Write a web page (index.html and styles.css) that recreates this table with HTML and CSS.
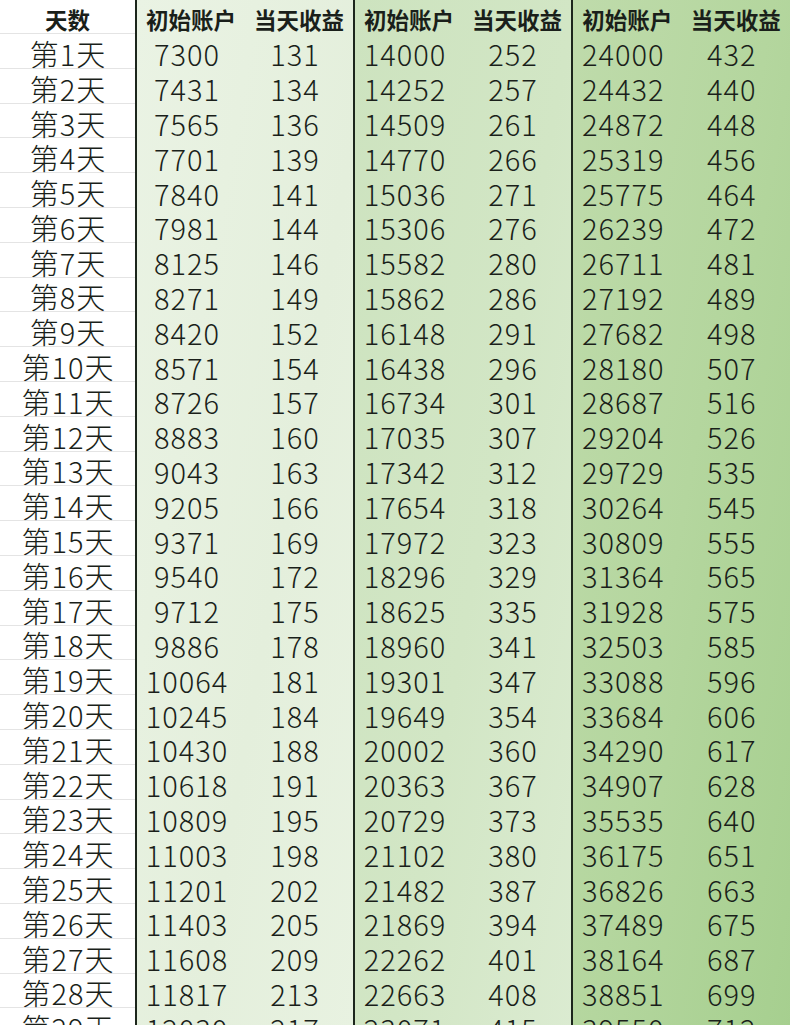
FILE: index.html
```html
<!DOCTYPE html>
<html lang="zh">
<head>
<meta charset="utf-8">
<title>收益表</title>
<link rel="stylesheet" href="styles.css">
</head>
<body>
<div class="sheet">
  <div class="days">
    <div class="hd">天数</div>
    <div class="c">第1天</div><div class="c">第2天</div><div class="c">第3天</div><div class="c">第4天</div>
    <div class="c">第5天</div><div class="c">第6天</div><div class="c">第7天</div><div class="c">第8天</div>
    <div class="c">第9天</div><div class="c">第10天</div><div class="c">第11天</div><div class="c">第12天</div>
    <div class="c">第13天</div><div class="c">第14天</div><div class="c">第15天</div><div class="c">第16天</div>
    <div class="c">第17天</div><div class="c">第18天</div><div class="c">第19天</div><div class="c">第20天</div>
    <div class="c">第21天</div><div class="c">第22天</div><div class="c">第23天</div><div class="c">第24天</div>
    <div class="c">第25天</div><div class="c">第26天</div><div class="c">第27天</div><div class="c">第28天</div>
    <div class="c">第29天</div>
  </div>
  <div class="group g1">
    <div class="hd">初始账户</div><div class="hd">当天收益</div>
    <div class="c">7300</div><div class="c">131</div>
    <div class="c">7431</div><div class="c">134</div>
    <div class="c">7565</div><div class="c">136</div>
    <div class="c">7701</div><div class="c">139</div>
    <div class="c">7840</div><div class="c">141</div>
    <div class="c">7981</div><div class="c">144</div>
    <div class="c">8125</div><div class="c">146</div>
    <div class="c">8271</div><div class="c">149</div>
    <div class="c">8420</div><div class="c">152</div>
    <div class="c">8571</div><div class="c">154</div>
    <div class="c">8726</div><div class="c">157</div>
    <div class="c">8883</div><div class="c">160</div>
    <div class="c">9043</div><div class="c">163</div>
    <div class="c">9205</div><div class="c">166</div>
    <div class="c">9371</div><div class="c">169</div>
    <div class="c">9540</div><div class="c">172</div>
    <div class="c">9712</div><div class="c">175</div>
    <div class="c">9886</div><div class="c">178</div>
    <div class="c">10064</div><div class="c">181</div>
    <div class="c">10245</div><div class="c">184</div>
    <div class="c">10430</div><div class="c">188</div>
    <div class="c">10618</div><div class="c">191</div>
    <div class="c">10809</div><div class="c">195</div>
    <div class="c">11003</div><div class="c">198</div>
    <div class="c">11201</div><div class="c">202</div>
    <div class="c">11403</div><div class="c">205</div>
    <div class="c">11608</div><div class="c">209</div>
    <div class="c">11817</div><div class="c">213</div>
    <div class="c">12030</div><div class="c">217</div>
  </div>
  <div class="group g2">
    <div class="hd">初始账户</div><div class="hd">当天收益</div>
    <div class="c">14000</div><div class="c">252</div>
    <div class="c">14252</div><div class="c">257</div>
    <div class="c">14509</div><div class="c">261</div>
    <div class="c">14770</div><div class="c">266</div>
    <div class="c">15036</div><div class="c">271</div>
    <div class="c">15306</div><div class="c">276</div>
    <div class="c">15582</div><div class="c">280</div>
    <div class="c">15862</div><div class="c">286</div>
    <div class="c">16148</div><div class="c">291</div>
    <div class="c">16438</div><div class="c">296</div>
    <div class="c">16734</div><div class="c">301</div>
    <div class="c">17035</div><div class="c">307</div>
    <div class="c">17342</div><div class="c">312</div>
    <div class="c">17654</div><div class="c">318</div>
    <div class="c">17972</div><div class="c">323</div>
    <div class="c">18296</div><div class="c">329</div>
    <div class="c">18625</div><div class="c">335</div>
    <div class="c">18960</div><div class="c">341</div>
    <div class="c">19301</div><div class="c">347</div>
    <div class="c">19649</div><div class="c">354</div>
    <div class="c">20002</div><div class="c">360</div>
    <div class="c">20363</div><div class="c">367</div>
    <div class="c">20729</div><div class="c">373</div>
    <div class="c">21102</div><div class="c">380</div>
    <div class="c">21482</div><div class="c">387</div>
    <div class="c">21869</div><div class="c">394</div>
    <div class="c">22262</div><div class="c">401</div>
    <div class="c">22663</div><div class="c">408</div>
    <div class="c">23071</div><div class="c">415</div>
  </div>
  <div class="group g3">
    <div class="hd">初始账户</div><div class="hd">当天收益</div>
    <div class="c">24000</div><div class="c">432</div>
    <div class="c">24432</div><div class="c">440</div>
    <div class="c">24872</div><div class="c">448</div>
    <div class="c">25319</div><div class="c">456</div>
    <div class="c">25775</div><div class="c">464</div>
    <div class="c">26239</div><div class="c">472</div>
    <div class="c">26711</div><div class="c">481</div>
    <div class="c">27192</div><div class="c">489</div>
    <div class="c">27682</div><div class="c">498</div>
    <div class="c">28180</div><div class="c">507</div>
    <div class="c">28687</div><div class="c">516</div>
    <div class="c">29204</div><div class="c">526</div>
    <div class="c">29729</div><div class="c">535</div>
    <div class="c">30264</div><div class="c">545</div>
    <div class="c">30809</div><div class="c">555</div>
    <div class="c">31364</div><div class="c">565</div>
    <div class="c">31928</div><div class="c">575</div>
    <div class="c">32503</div><div class="c">585</div>
    <div class="c">33088</div><div class="c">596</div>
    <div class="c">33684</div><div class="c">606</div>
    <div class="c">34290</div><div class="c">617</div>
    <div class="c">34907</div><div class="c">628</div>
    <div class="c">35535</div><div class="c">640</div>
    <div class="c">36175</div><div class="c">651</div>
    <div class="c">36826</div><div class="c">663</div>
    <div class="c">37489</div><div class="c">675</div>
    <div class="c">38164</div><div class="c">687</div>
    <div class="c">38851</div><div class="c">699</div>
    <div class="c">39550</div><div class="c">712</div>
  </div>
</div>
</body>
</html>
```

FILE: styles.css
```css
html, body {
  margin: 0;
  padding: 0;
  height: 1025px;
  overflow: hidden;
  background: #ffffff;
}
.sheet {
  display: flex;
  width: 790px;
  font-family: "Noto Sans CJK SC", "Noto Sans", sans-serif;
  color: #1a1f1a;
}
.days {
  width: 135px;
  display: flex;
  flex-direction: column;
  background: #ffffff;
}
.days .hd, .days .c {
  border-bottom: 1px solid #e4e4e4;
  box-sizing: border-box;
}
.group {
  width: 216px;
  border-left: 2px solid #1c261c;
  display: grid;
  grid-template-columns: 1fr 1fr;
  grid-template-rows: 34px;
  grid-auto-rows: 34.8px;
  align-content: start;
}
.g3 { width: 217px; }
.g1 {
  background: linear-gradient(100deg, #eaf3e4 0%, #e4efdc 60%, #e8f2e1 100%);
}
.g2 {
  background: linear-gradient(100deg, #cde3bf 0%, #d2e6c5 55%, #dbebd1 100%);
}
.g3 {
  background: linear-gradient(100deg, #bfdbab 0%, #b4d69e 50%, #a6cf8f 100%);
}
.hd {
  height: 34px;
  display: flex;
  align-items: center;
  justify-content: center;
  font-size: 22.5px;
  font-weight: 700;
  padding-top: 4px;
  box-sizing: border-box;
  white-space: nowrap;
}
.c {
  height: 34.8px;
  display: flex;
  align-items: center;
  justify-content: center;
  font-size: 29px;
  font-weight: 300;
  line-height: 1;
  letter-spacing: 1px;
  padding-top: 5px;
  box-sizing: border-box;
  white-space: nowrap;
}
.days .c { padding-left: 1px; }
.group .c:nth-child(odd) { padding-right: 8px; }
.group .c:nth-child(even) { padding-right: 8px; }
```
